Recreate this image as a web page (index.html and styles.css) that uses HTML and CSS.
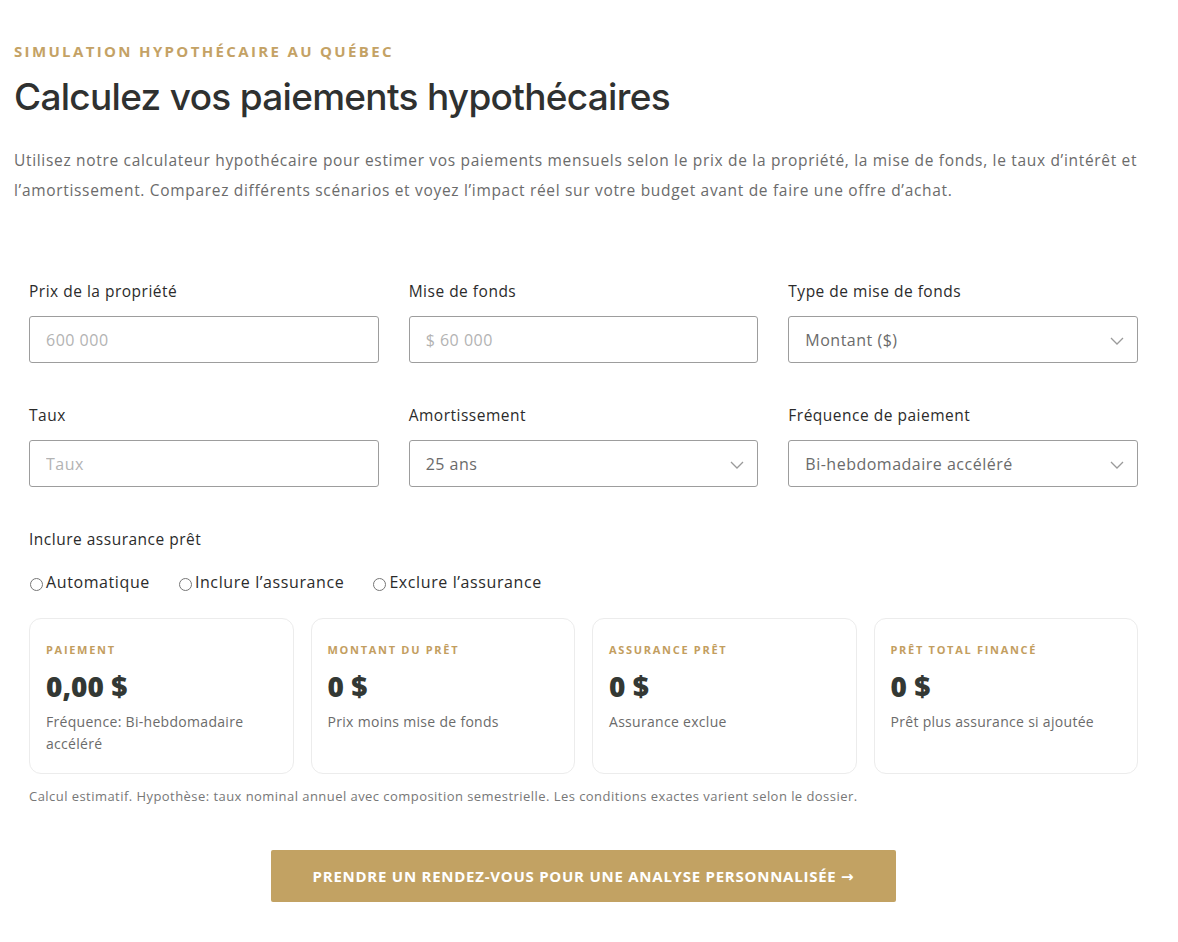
FILE: index.html
```html
<!DOCTYPE html>
<html lang="fr">
<head>
<meta charset="utf-8">
<title>Calculateur hypothécaire</title>
<link rel="stylesheet" href="styles.css">
</head>
<body>
<main class="page">
  <p class="eyebrow">Simulation hypothécaire au Québec</p>
  <h1 class="title">Calculez vos paiements hypothécaires</h1>
  <p class="intro">Utilisez notre calculateur hypothécaire pour estimer vos paiements mensuels selon le prix de la propriété, la mise de fonds, le taux d’intérêt et l’amortissement. Comparez différents scénarios et voyez l’impact réel sur votre budget avant de faire une offre d’achat.</p>

  <section class="calc">
    <div class="grid">
      <label class="field">
        <span class="label">Prix de la propriété</span>
        <input class="input" type="text" placeholder="600 000">
      </label>
      <label class="field">
        <span class="label">Mise de fonds</span>
        <input class="input" type="text" placeholder="$ 60 000">
      </label>
      <label class="field">
        <span class="label">Type de mise de fonds</span>
        <span class="select-wrap">
          <select class="input select"><option>Montant ($)</option><option>Pourcentage (%)</option></select>
          <svg class="chev" width="14" height="8" viewBox="0 0 14 8"><path d="M1 1l6 6 6-6" fill="none" stroke="#9a9a9a" stroke-width="1.3"/></svg>
        </span>
      </label>
      <label class="field">
        <span class="label">Taux</span>
        <input class="input" type="text" placeholder="Taux">
      </label>
      <label class="field">
        <span class="label">Amortissement</span>
        <span class="select-wrap">
          <select class="input select"><option>25 ans</option><option>30 ans</option></select>
          <svg class="chev" width="14" height="8" viewBox="0 0 14 8"><path d="M1 1l6 6 6-6" fill="none" stroke="#9a9a9a" stroke-width="1.3"/></svg>
        </span>
      </label>
      <label class="field">
        <span class="label">Fréquence de paiement</span>
        <span class="select-wrap">
          <select class="input select"><option>Bi-hebdomadaire accéléré</option><option>Mensuel</option></select>
          <svg class="chev" width="14" height="8" viewBox="0 0 14 8"><path d="M1 1l6 6 6-6" fill="none" stroke="#9a9a9a" stroke-width="1.3"/></svg>
        </span>
      </label>
    </div>

    <div class="insurance">
      <span class="label">Inclure assurance prêt</span>
      <div class="radios">
        <label class="radio"><input type="radio" name="ins">Automatique</label>
        <label class="radio"><input type="radio" name="ins">Inclure l’assurance</label>
        <label class="radio"><input type="radio" name="ins">Exclure l’assurance</label>
      </div>
    </div>

    <div class="cards">
      <div class="card">
        <p class="card-label">Paiement</p>
        <p class="card-value">0,00 $</p>
        <p class="card-desc">Fréquence: Bi-hebdomadaire accéléré</p>
      </div>
      <div class="card">
        <p class="card-label">Montant du prêt</p>
        <p class="card-value">0 $</p>
        <p class="card-desc">Prix moins mise de fonds</p>
      </div>
      <div class="card">
        <p class="card-label">Assurance prêt</p>
        <p class="card-value">0 $</p>
        <p class="card-desc">Assurance exclue</p>
      </div>
      <div class="card">
        <p class="card-label">Prêt total financé</p>
        <p class="card-value">0 $</p>
        <p class="card-desc">Prêt plus assurance si ajoutée</p>
      </div>
    </div>

    <p class="note">Calcul estimatif. Hypothèse: taux nominal annuel avec composition semestrielle. Les conditions exactes varient selon le dossier.</p>

    <div class="cta-row">
      <a class="cta" href="#">Prendre un rendez-vous pour une analyse personnalisée →</a>
    </div>
  </section>
</main>
</body>
</html>
```

FILE: styles.css
```css
* { box-sizing: border-box; }
html, body { margin: 0; background: #fff; }
body {
  font-family: "Open Sans", "DejaVu Sans", sans-serif;
  color: #333;
}
.page {
  padding: 42px 14px 40px 14px;
}
.eyebrow {
  margin: 0;
  font-size: 15px;
  line-height: 18px;
  font-weight: 700;
  letter-spacing: 2.35px;
  text-transform: uppercase;
  color: #c4a265;
}
.title {
  margin: 15px 0 0 0;
  font-family: "Inter", "Liberation Sans", sans-serif;
  font-weight: 500;
  font-size: 37px;
  line-height: 44px;
  letter-spacing: -0.7px;
  color: #2f3130;
}
.intro {
  margin: 26px 0 0 0;
  font-size: 15.5px;
  line-height: 30px;
  letter-spacing: 0.68px;
  color: #6b6b6b;
}
.calc {
  padding: 0 26px 0 15px;
  margin-top: 76px;
}
.grid {
  display: grid;
  grid-template-columns: repeat(3, 1fr);
  column-gap: 30px;
  row-gap: 42px;
}
.field {
  display: flex;
  flex-direction: column;
  gap: 15px;
}
.label {
  font-size: 15.5px;
  line-height: 20px;
  letter-spacing: 0.5px;
  color: #2b2b2b;
}
.input {
  height: 47px;
  width: 100%;
  border: 1px solid #9d9d9d;
  border-radius: 3px;
  padding: 0 16px;
  font-family: inherit;
  font-size: 16px;
  letter-spacing: 0.5px;
  color: #6b6b6b;
  background: #fff;
  outline: none;
}
.input::placeholder { color: #b3b3b3; }
.select-wrap { position: relative; display: block; }
.select {
  appearance: none;
  -webkit-appearance: none;
}
.chev {
  position: absolute;
  right: 14px;
  top: 21px;
  pointer-events: none;
}
.insurance {
  margin-top: 41px;
}
.radios {
  display: flex;
  gap: 28px;
  margin-top: 21px;
}
.radio {
  display: flex;
  align-items: center;
  font-size: 16px;
  letter-spacing: 0.6px;
  color: #2b2b2b;
}
.radio input {
  margin: 4px 3px 0 1px;
  width: 13px;
  height: 13px;
}
.cards {
  display: grid;
  grid-template-columns: repeat(4, 1fr);
  gap: 17px;
  margin-top: 25px;
}
.card {
  border: 1px solid #ececec;
  border-radius: 12px;
  padding: 24px 16px 18px 16px;
  min-height: 156px;
}
.card p { margin: 0; }
.card-label {
  font-size: 11px;
  line-height: 14px;
  font-weight: 700;
  letter-spacing: 1.7px;
  text-transform: uppercase;
  color: #c39e5f;
}
.card-value {
  margin-top: 11px !important;
  font-size: 28px;
  line-height: 36px;
  font-weight: 800;
  color: #333834;
}
.card-desc {
  margin-top: 7px !important;
  font-size: 14px;
  line-height: 22px;
  letter-spacing: 0.3px;
  color: #6b6b6b;
}
.note {
  margin: 14px 0 0 0;
  font-size: 13px;
  line-height: 16px;
  letter-spacing: 0.45px;
  color: #777;
}
.cta-row {
  display: flex;
  justify-content: center;
  margin-top: 46px;
}
.cta {
  display: block;
  background: #c2a263;
  color: #fff;
  text-decoration: none;
  text-transform: uppercase;
  font-weight: 700;
  font-size: 15px;
  letter-spacing: 0.75px;
  line-height: 52px;
  padding: 0 42px;
  border-radius: 2px;
}
```
